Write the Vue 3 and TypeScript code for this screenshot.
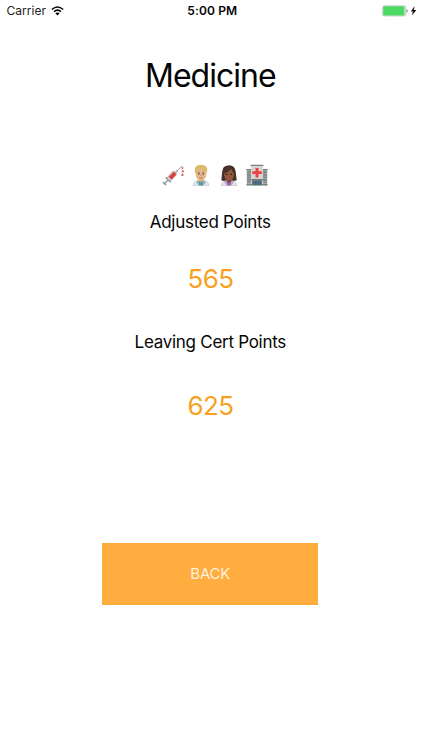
<script setup lang="ts">
interface Score {
  label: string
  value: number
}

const course = 'Medicine'
const scores: Score[] = [
  { label: 'Adjusted Points', value: 565 },
  { label: 'Leaving Cert Points', value: 625 },
]
</script>

<template>
  <main class="screen">
    <header class="status">
      <div class="carrier">
        <span>Carrier</span>
        <svg class="wifi" viewBox="0 0 13 10">
          <path d="M.8 3.5Q6.5-1.5 12.2 3.5M3 5.7Q6.5 2.6 10 5.7" fill="none" stroke="#000" stroke-width="1.5" />
          <path d="M4.4 7.3Q6.5 5.5 8.6 7.3L6.5 9.6Z" />
        </svg>
      </div>
      <span class="time">5:00 PM</span>
      <div class="power">
        <svg width="36" height="12" viewBox="0 0 36 12">
          <rect x=".8" y=".9" width="23" height="10" rx="1.5" fill="#fff" stroke="#a9b0ab" stroke-width=".7" />
          <rect x="1.2" y="1.3" width="21.3" height="9.2" rx=".6" fill="#4cd964" />
          <path d="M24.7 4Q26.4 5.9 24.7 7.8Z" fill="#222" />
          <path d="M32.6 1.1L28.8 6.4H31L29.9 10.6L34.4 4.9H31.8Z" fill="#111" />
        </svg>
      </div>
    </header>

    <h1 class="title">{{ course }}</h1>

    <div class="emojis">
      <svg viewBox="0 0 24 24">
        <path d="M15.5 8.5L22 2" stroke="#8b8f96" stroke-width=".9" />
        <path d="M13.8 10.2L17 7" stroke="#b9b2b5" stroke-width="2.2" />
        <path d="M5.3 15.2L12.3 7.6L16.2 11.3L9 18.9Z" fill="#d7dde2" stroke="#9a9fa6" stroke-width=".7" />
        <path d="M7.2 14L12.6 8.1L15.8 11.2L10.3 17.1Z" fill="#dc3f40" />
        <path d="M9 12.8L13 8.8" stroke="#ef8482" stroke-width=".8" />
        <path d="M4 14.7L9.5 20" stroke="#8b929b" stroke-width="1.5" />
        <path d="M6.4 17.6L2.8 21.3" stroke="#a5acb4" stroke-width="2" />
        <path d="M1 19.8L4.3 23" stroke="#858c95" stroke-width="1.5" />
        <path d="M22.4 3.2l.8 1.3q-.9 1.3-1.8 0zM22.8 6.6l1 1.6q-1 1.5-2.1 0zM22.3 10.4l1.1 1.8q-1.1 1.5-2.2 0z" fill="#d94a50" stroke="#d94a50" stroke-width=".5" />
      </svg>
      <svg viewBox="0 0 24 24">
        <path d="M3.5 23.4Q3.6 19.3 8.2 18.2H15.8Q20.4 19.3 20.5 23.4Z" fill="#e2e7ed" stroke="#aeb6bf" stroke-width=".6" />
        <path d="M9.2 18H14.8V20L13.6 23.4H10.4L9.2 20Z" fill="#48a0ac" />
        <path d="M9.5 15H14.5V18.6L12 20.4L9.5 18.6Z" fill="#d29b6b" />
        <path d="M6.2 7Q6.5 2.8 12 2.8T17.8 7V11.8Q17.2 17.8 12 18.4Q6.8 17.8 6.2 11.8Z" fill="#e6b88e" />
        <path d="M5.6 10.5Q3.6 1.2 10.4 1.2Q12.7.1 15.7 1.7Q20.2 3 18.4 10.5L17.3 7.4Q13.5 7 9.5 5.5Q7.3 6.4 6.7 10Z" fill="#d9bb68" />
        <path d="M8.3 9h2.3M13.4 9h2.3M10 15Q12 15.8 14 15" fill="none" stroke="#a5674b" stroke-width=".8" />
        <circle cx="9.6" cy="10.8" r=".9" fill="#59483d" />
        <circle cx="14.4" cy="10.8" r=".9" fill="#59483d" />
        <path d="M12 10.8V13" stroke="#c98f66" stroke-width=".9" />
        <path d="M8 18.5L7.6 20.5L10.8 23.2M16 18.5L16.4 20.5L13.2 23.2" fill="none" stroke="#69798a" stroke-width=".9" />
      </svg>
      <svg viewBox="0 0 24 24">
        <path d="M3.6 17.5Q4.2 13.5 4.5 9Q4.8 1.6 11 1.5Q18.6.9 19.4 9Q19.7 13.5 20.5 17.5Q18 19 15.4 18.4H8Q5.5 19 3.6 17.5Z" fill="#46302a" />
        <path d="M3.5 23.4Q3.6 19.5 8.2 18.4H15.8Q20.4 19.5 20.5 23.4Z" fill="#e4e4ec" stroke="#b0b2be" stroke-width=".6" />
        <path d="M9.2 18H14.8V20L13.6 23.4H10.4L9.2 20Z" fill="#a95db0" />
        <path d="M9.5 15H14.5V18.6L12 20.4L9.5 18.6Z" fill="#704330" />
        <path d="M6.8 8Q7.5 4 12 4T17.2 8V12.2Q16.4 17.8 12 18.2Q7.6 17.8 6.8 12.2Z" fill="#92593f" />
        <path d="M6.2 10.5Q6 3.5 12.2 3Q18.1 3.2 17.8 10.5Q15.5 8.5 14.4 5.4Q11.5 8.5 6.2 10.5Z" fill="#4a322a" />
        <circle cx="9.6" cy="11.2" r=".9" fill="#251a18" />
        <circle cx="14.4" cy="11.2" r=".9" fill="#251a18" />
        <path d="M10.2 15.2Q12 16 13.8 15.2" fill="none" stroke="#a9504c" stroke-width=".9" />
        <path d="M8 18.7L7.6 20.5L10.8 23.2M16 18.7L16.4 20.5L13.2 23.2" fill="none" stroke="#777488" stroke-width=".8" />
      </svg>
      <svg viewBox="0 0 24 24">
        <path d="M.8 6H6V23H.8ZM18 6H23.2V23H18Z" fill="#a9aaa5" />
        <path d="M5.6 1.6H18.4V23H5.6Z" fill="#d8d5d0" />
        <path d="M4.9.8H19.1V2.3H4.9ZM.3 5.4H5.6V6.8H.3ZM18.4 5.4H23.7V6.8H18.4Z" fill="#81817f" />
        <path d="M10.4 4.3H13.6V7.9H17.2V11H13.6V14.6H10.4V11H6.8V7.9H10.4Z" fill="#ed3f45" />
        <path d="M2.2 8V20.5M4.3 8V20.5M19.7 8V20.5M21.8 8V20.5" stroke="#5c7078" stroke-width="1.2" stroke-dasharray="2 .8" />
        <path d="M5.8 16.4H18.2V18.2H5.8Z" fill="#66737a" />
        <path d="M6.8 18.2H17.2V23.4H6.8Z" fill="#40616f" />
        <path d="M9.4 18.8V23.4M12 18.8V23.4M14.6 18.8V23.4" stroke="#829ba4" stroke-width=".6" />
        <path d="M.5 22H6.8V23.4H.5ZM17.2 22H23.5V23.4H17.2Z" fill="#69756a" />
      </svg>
    </div>

    <section v-for="score in scores" :key="score.label" class="score">
      <h2 class="label">{{ score.label }}</h2>
      <p class="value">{{ score.value }}</p>
    </section>

    <button class="back" type="button">BACK</button>
  </main>
</template>

<style>
body {
  margin: 0;
  background: #fff;
}
</style>

<style scoped>
.screen {
  box-sizing: border-box;
  width: 420.6px;
  height: 750px;
  display: flex;
  flex-direction: column;
  align-items: center;
  background: #fff;
  color: #050505;
  font-family: Inter, "Liberation Sans", sans-serif;
}
.status {
  box-sizing: border-box;
  width: 100%;
  height: 22px;
  padding: 0 2.6px 0 6.5px;
  display: grid;
  grid-template-columns: 1fr auto 1fr;
  align-items: center;
  font-size: 12px;
  line-height: 22px;
}
.carrier {
  display: flex;
  align-items: center;
  gap: 5px;
  color: #222;
  letter-spacing: 0.05px;
}
.wifi {
  width: 13px;
  height: 10px;
}
.time {
  font-weight: 600;
  letter-spacing: 0.15px;
}
.power {
  display: flex;
  justify-content: flex-end;
}
.title {
  margin: 34px 0 0;
  font-size: 32px;
  line-height: 40px;
  font-weight: 400;
  letter-spacing: -1px;
}
.emojis {
  display: flex;
  gap: 6px;
  margin-top: 68px;
  padding-left: 9.4px;
}
.emojis svg {
  width: 22px;
  height: 22px;
}
.score {
  text-align: center;
}
.label {
  margin: 24px 0 0;
  font-size: 17px;
  line-height: 24px;
  font-weight: 400;
  letter-spacing: -0.28px;
}
.value {
  margin: 29px 0 0;
  padding-left: 0.5px;
  font-size: 26px;
  line-height: 32px;
  letter-spacing: -0.5px;
  color: #f99f22;
}
.score + .score .label {
  margin-top: 35px;
}
.score + .score .value {
  margin-top: 36px;
}
.back {
  width: 216px;
  height: 62px;
  margin-top: 121px;
  padding: 0;
  border: 0;
  background: #ffad3e;
  color: #fff2df;
  font: 400 15px/62px Inter, "Liberation Sans", sans-serif;
  letter-spacing: -0.2px;
}
</style>
